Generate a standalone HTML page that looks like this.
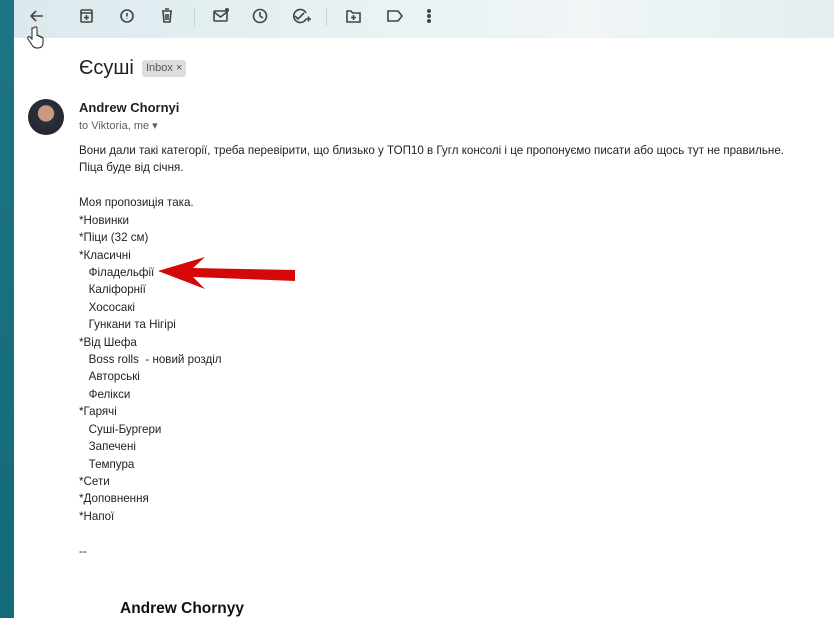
<!DOCTYPE html>
<html><head><meta charset="utf-8"><style>
body{margin:0;width:834px;height:618px;overflow:hidden;background:#fff;font-family:"Liberation Sans",Arial,sans-serif;position:relative}
.left{position:absolute;left:0;top:0;width:14px;height:618px;background:linear-gradient(#1d7484,#136a7a)}
.top{position:absolute;left:14px;top:0;width:820px;height:38px;background:linear-gradient(90deg,#dbe9ed,#e8f1f3 40%,#f0f5f6 70%,#e3eef1)}
.sep{position:absolute;top:8px;width:1px;height:18px;background:#c9d4d8}
h1{position:absolute;left:79px;top:57px;margin:0;font-weight:400;font-size:20px;color:#1f1f1f}
.tag{position:absolute;left:142px;top:60px;background:#ddd;border-radius:3px;font-size:11px;color:#555;padding:1px 4px;height:15px;line-height:15px}
.av{position:absolute;left:28px;top:99px;width:36px;height:36px;border-radius:50%;background:radial-gradient(circle at 50% 40%,#c79b83 0 28%,#2a2f38 30%,#20242c)}
.name{position:absolute;left:79px;top:100px;font-weight:700;font-size:13px;color:#1f1f1f}
.to{position:absolute;left:79px;top:119px;font-size:11px;color:#5e5e5e}
.body{position:absolute;left:79px;top:142px;font-size:11.6px;line-height:17.42px;color:#222;white-space:pre}
.sig{position:absolute;left:120px;top:600px;font-weight:700;font-size:15.5px;color:#111}
</style></head><body>
<div class="left"></div>
<div class="top">
<svg width="820" height="38" style="position:absolute;left:0;top:0" fill="none" stroke="#444" stroke-width="1.6">
<path d="M29 16H17M22 11l-5 5 5 5"/>
<rect x="67" y="10" width="11" height="12" rx="1"/><path d="M67 13h11M72.5 15v5M70 17.5h5"/>
<circle cx="113" cy="16" r="6"/><path d="M113 13v3.5M113 18.5v.5"/>
<path d="M148 11h10M151 9h4M149 11l1 11h6l1-11M152 14v6M154 14v6"/>
<rect x="200" y="11" width="13" height="10" rx="1"/><path d="M200 12l6.5 5 6.5-5"/><circle cx="213" cy="10" r="2" fill="#444" stroke="none"/>
<circle cx="246" cy="16" r="6.5"/><path d="M246 12v4l3 2"/>
<path d="M292 13a6.5 6.5 0 1 0 0 6M281 16l3 3 6-6M292 19h5M294.5 16.5v5"/>
<path d="M333 11h4l1.5 2H346v9h-13z"/><path d="M339.5 15v5M337 17.5h5"/>
<path d="M374 11h10l4 5-4 5h-10z"/>
<circle cx="415" cy="11" r="1.2" fill="#444"/><circle cx="415" cy="16" r="1.2" fill="#444"/><circle cx="415" cy="21" r="1.2" fill="#444"/>
</svg>
<div class="sep" style="left:180px"></div><div class="sep" style="left:312px"></div>
</div>
<svg style="position:absolute;left:25px;top:26px" width="20" height="24" viewBox="0 0 20 24"><path d="M7 2v11l-2-2c-1-1-3 0-2 2l4 6c1 2 3 3 5 3h1c3 0 5-2 5-5v-5c0-1-2-1-2 0v-1c0-1-2-1-2 0v-1c0-1-2-1-2 0V2c0-1.5-3-1.5-3 0z" fill="#fff" stroke="#222" stroke-width="1"/></svg>
<h1>Єсуші</h1><div class="tag">Inbox ×</div>
<div class="av"></div>
<div class="name">Andrew Chornyi</div>
<div class="to">to Viktoria, me ▾</div>
<div class="body">Вони дали такі категорії, треба перевірити, що близько у ТОП10 в Гугл консолі і це пропонуємо писати або щось тут не правильне.
Піца буде від січня.

Моя пропозиція така.
*Новинки
*Піци (32 см)
*Класичні
   Філадельфії
   Каліфорнії
   Хососакі
   Гункани та Нігірі
*Від Шефа
   Boss rolls  - новий розділ
   Авторські
   Фелікси
*Гарячі
   Суші-Бургери
   Запечені
   Темпура
*Сети
*Доповнення
*Напої

--</div>
<svg style="position:absolute;left:0;top:0" width="834" height="618"><polygon points="158,271 205,257 193,268 295,270 295,281 193,277 205,289" fill="#d40808"/></svg>
<div class="sig">Andrew Chornyy</div>
</body></html>
